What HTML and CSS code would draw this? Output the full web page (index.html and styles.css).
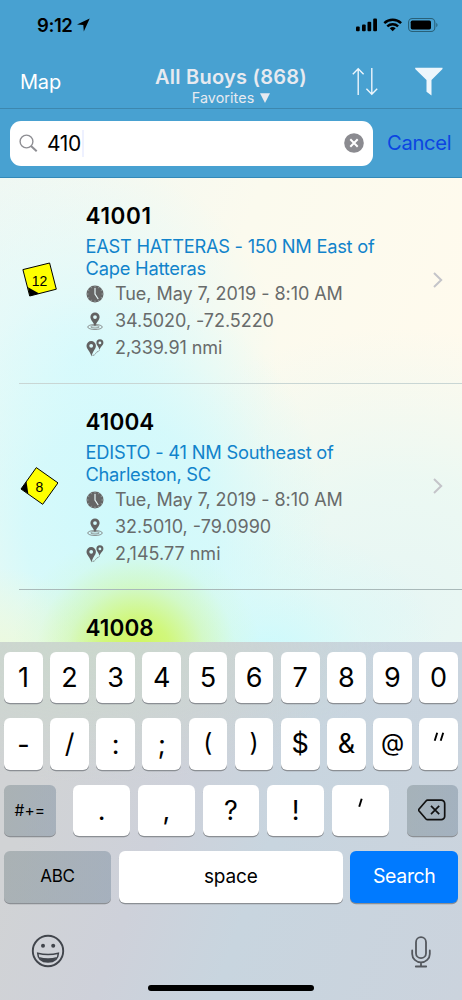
FILE: index.html
```html
<!DOCTYPE html>
<html lang="en">
<head>
<meta charset="utf-8">
<title>All Buoys</title>
<link rel="stylesheet" href="styles.css">
</head>
<body>
<svg class="defs" width="0" height="0">
  <symbol id="clock" viewBox="0 0 18 18">
    <circle cx="9" cy="9" r="8.5" fill="#666"/>
    <path d="M9 3v6l3.2 5" fill="none" stroke="#e6f5f5" stroke-width="1.2"/>
    <path d="M9 .8v1.7M9 15.5v1.7M.8 9h1.700M15.500 9h1.700M4.900 1.900l.7 1.300M1.900 4.900l1.300.7M16.100 4.900l-1.300.7M13.100 1.900l-.7 1.300M1.900 13.100l1.300-.7M4.900 16.100l.7-1.300M16.100 13.100l-1.300-.7M13.100 16.100l-.7-1.300" stroke="#b5c4c4" stroke-width=".6"/>
  </symbol>
  <symbol id="place" viewBox="0 0 18 18">
    <g fill="none" stroke="#777" stroke-width=".8"><ellipse cx="9" cy="15" rx="7.3" ry="2.5"/><ellipse cx="9" cy="14.8" rx="4.2" ry="1.2"/></g>
    <path fill="#626262" fill-rule="evenodd" d="M9 .4a4.6 4.6 0 0 0-4.6 4.6C4.4 8 7.5 10 9 14.5 10.500 10 13.600 8 13.600 5A4.600 4.600 0 0 0 9 .4zm0 2.800a1.900 1.900 0 1 1 0 3.800 1.900 1.900 0 0 1 0-3.800z"/>
  </symbol>
  <symbol id="distance" viewBox="0 0 18 18">
    <path fill="#626262" fill-rule="evenodd" d="M5.200 2A4.700 4.700 0 0 0 .5 6.700C.5 10 4.400 12.500 5.500 17.600 6.400 12.500 9.900 10 9.900 6.700A4.700 4.700 0 0 0 5.200 2zm0 2.900a1.900 1.900 0 1 1 0 3.800 1.900 1.900 0 0 1 0-3.800zM13.900.3a3.500 3.500 0 0 0-3.500 3.500C10.400 6.300 12.800 7.500 13.500 11 14.500 7.500 17.400 6.300 17.400 3.800A3.500 3.500 0 0 0 13.900.3zm0 2.200a1.400 1.400 0 1 1 0 2.800 1.400 1.400 0 0 1 0-2.800z"/>
    <path d="M6.500 16.300c3.500.2 2.500-2.600 5-3.600 1.500-.5 1.800-1 2-1.800" fill="none" stroke="#666" stroke-width=".8" stroke-dasharray="1.300 .6"/>
  </symbol>
</svg>

<header class="top">
  <div class="status">
    <span class="time">9:12</span>
    <svg class="arrow" width="13" height="14" viewBox="0 0 13 14"><path d="M12.700.4L6.800 13.400 6.300 6.900 0 6.400z"/></svg>
    <span class="grow"></span>
    <svg width="84" height="16" viewBox="0 0 84 16">
      <rect x="1" y="9.600" width="3.700" height="4.600" rx="1"/><rect x="7" y="7.400" width="3.700" height="6.800" rx="1"/><rect x="12.500" y="4.800" width="3.700" height="9.400" rx="1"/><rect x="18.200" y="1.600" width="3.800" height="12.600" rx="1"/>
      <g fill="none" stroke="#000" stroke-width="2.500"><path d="M29.300 6.100a12.300 12.300 0 0 1 16.800 0"/><path d="M32.300 9.300a8 8 0 0 1 10.800 0"/></g>
      <path d="M34.700 11.300a4.700 4.700 0 0 1 6 0l-3 2.900z"/>
      <rect x="53.600" y="1.500" width="26.200" height="13" rx="3.800" fill="none" stroke="#286078" stroke-width="1.100"/>
      <rect x="55.700" y="3.600" width="20.300" height="8.900" rx="1.700"/><path d="M81.300 5.800c1.600.8 1.600 3.600 0 4.400z" fill="#286078"/>
    </svg>
  </div>
  <nav class="nav">
    <span class="map">Map</span>
    <div class="heading"><h1>All Buoys (868)</h1><p>Favorites <svg width="10" height="10" viewBox="0 0 10 10"><path d="M0 .3h10L5 10z" fill="#e7eaf0"/></svg></p></div>
    <svg class="sort" width="26" height="29" viewBox="0 0 26 29"><path d="M6.200 28V1.700M.8 7.200l5.400-5.500 5.400 5.500M19.800 1v26.300M14.400 21.800l5.400 5.500 5.400-5.500" fill="none" stroke="#edf6fc" stroke-width="1.400"/></svg>
    <svg class="filter" width="28" height="29" viewBox="0 0 28 29"><path d="M.2.800h27.300v1.300L16.500 13v15.500l-5-3.700V13L.2 2.100z" fill="#edf6fc"/></svg>
  </nav>
</header>
<section class="searchbar">
  <div class="field">
    <svg width="19" height="19" viewBox="0 0 19 19"><circle cx="7.500" cy="7.500" r="6.400" fill="none" stroke="#8e8e93" stroke-width="1.400"/><path d="M12 12l5.700 5.300" stroke="#8e8e93" stroke-width="2"/></svg>
    <span class="query">410</span><i class="caret"></i>
    <svg class="clear" width="20" height="20" viewBox="0 0 20 20"><circle cx="10" cy="10" r="9.800" fill="#8b8b90"/><path d="M6.300 6.300l7.400 7.400M13.700 6.300l-7.400 7.400" stroke="#fff" stroke-width="2"/></svg>
  </div>
  <span class="cancel">Cancel</span>
</section>

<main class="list">
  <article class="row">
    <svg class="badge" width="38" height="40" viewBox="0 0 38 40"><path d="M2.900 8.600L29.600 2l6.700 26.200L9.700 35z" fill="#ff0" stroke="#000"/><path d="M8 26.300L19.200 32.600 9.700 35z"/><text x="19.500" y="25" text-anchor="middle">12</text></svg>
    <div class="info">
      <h2 class="wide">41001</h2>
      <p class="place"><span class="a1">EAST HATTERAS - 150 NM East of</span><br><span class="a2">Cape Hatteras</span></p>
      <p class="line"><svg><use href="#clock"/></svg><span class="date">Tue, May 7, 2019 - 8:10 AM</span></p>
      <p class="line"><svg><use href="#place"/></svg><span class="coords">34.5020, -72.5220</span></p>
      <p class="line"><svg><use href="#distance"/></svg><span class="dist">2,339.91 nmi</span></p>
    </div>
    <svg class="chev" width="10" height="16" viewBox="0 0 10 16"><path d="M1 1l7.200 7L1 15" fill="none" stroke="#c4c4c9" stroke-width="2"/></svg>
  </article>
  <article class="row second">
    <svg class="badge" width="38" height="40" viewBox="0 0 38 40"><path d="M16.300.6L38 15.900 22.700 37.300 1 22z" fill="#ff0" stroke="#000"/><path d="M6.500 14.500L8.300 26.800 1 22z"/><text x="19.300" y="25" text-anchor="middle">8</text></svg>
    <div class="info">
      <h2>41004</h2>
      <p class="place"><span class="b1">EDISTO - 41 NM Southeast of</span><br><span class="b2">Charleston, SC</span></p>
      <p class="line"><svg><use href="#clock"/></svg><span class="date">Tue, May 7, 2019 - 8:10 AM</span></p>
      <p class="line"><svg><use href="#place"/></svg><span>32.5010, -79.0990</span></p>
      <p class="line"><svg><use href="#distance"/></svg><span>2,145.77 nmi</span></p>
    </div>
    <svg class="chev" width="10" height="16" viewBox="0 0 10 16"><path d="M1 1l7.200 7L1 15" fill="none" stroke="#c4c4c9" stroke-width="2"/></svg>
  </article>
  <article class="row third"><span class="badge"></span><div class="info"><h2>41008</h2></div></article>
</main>

<section class="keyboard">
  <div class="keys ten"><b>1</b><b>2</b><b>3</b><b>4</b><b>5</b><b>6</b><b>7</b><b>8</b><b>9</b><b>0</b></div>
  <div class="keys ten"><b class="low">-</b><b>/</b><b class="low">:</b><b class="low">;</b><b class="paren">(</b><b class="paren">)</b><b>$</b><b>&amp;</b><b class="at">@</b><b><svg width="12" height="26" viewBox="0 0 12 26"><path d="M4.200 1.800L1.700 9.800M10.200 1.800L7.700 9.800" stroke="#000" stroke-width="1.900"/></svg></b></div>
  <div class="keys seven">
    <b class="dark sym">#+=</b>
    <div class="mid"><b>.</b><b>,</b><b>?</b><b>!</b><b><svg width="6" height="26" viewBox="0 0 6 26"><path d="M4.700 1.800L2.200 9.800" stroke="#000" stroke-width="1.900"/></svg></b></div>
    <b class="dark"><svg width="28" height="22" viewBox="0 0 28 22"><g fill="none" stroke="#111" stroke-width="1.700" stroke-linejoin="round"><path d="M9.500 1.200H23.200a3.500 3.500 0 0 1 3.500 3.500v12.500a3.500 3.500 0 0 1-3.500 3.500H9.500Q8.700 20.700 8 20L.9 11.800Q.3 11 .9 10.200L8 2Q8.700 1.200 9.500 1.200z"/><path d="M13 6.900l8.200 8.200M21.200 6.900l-8.200 8.200"/></g></svg></b>
  </div>
  <div class="keys bottom"><b class="dark abc">ABC</b><b class="space">space</b><b class="go">Search</b></div>
  <div class="tools">
    <svg width="34" height="34" viewBox="0 0 34 34"><circle cx="17" cy="17" r="15.200" fill="none" stroke="#41454c" stroke-width="1.900"/><circle cx="12" cy="11.800" r="2" fill="#41454c"/><circle cx="22.200" cy="11.800" r="2" fill="#41454c"/><path d="M6.700 19.200q10.300 2.600 20.700 0Q27 28 17 28T6.700 19.200z" fill="none" stroke="#41454c" stroke-width="1.500"/><path d="M8 23q9 2.500 18 0-2.500 5-9 5t-9-5z" fill="#41454c"/></svg>
    <svg class="mic" width="20" height="32" viewBox="0 0 20 32"><g fill="none" stroke="#54585e" stroke-width="1.800" stroke-linecap="round"><rect x="5" y="1.200" width="10" height="21" rx="5"/><path d="M1.200 14.500v3.500a8.800 8.300 0 0 0 17.600 0v-3.500M10 26.300v4M4.800 30.500h10.400"/></g></svg>
  </div>
  <div class="home"></div>
</section>
</body>
</html>
```
FILE: styles.css
```css
* { box-sizing: border-box; }
body { margin: 0; width: 462px; height: 1000px; overflow: hidden; display: flex; flex-direction: column; font-family: Inter, "Liberation Sans", sans-serif; color: #000; }
h1, h2, p { margin: 0; font-weight: 400; }
svg { display: block; flex: none; }
.defs { position: absolute; }
.top { height: 109px; background: #48a1d1; border-bottom: 1px solid #3d87ae; flex: none; }
.status { height: 49px; display: flex; align-items: center; padding: 0 23px 0 37px; }
.time { font-size: 18.500px; font-weight: 600; letter-spacing: -.4px; }
.arrow { margin-left: 5px; }
.grow { flex: 1; }
.nav { height: 59px; display: grid; grid-template-columns: 116px 230px 46px 1fr; padding-top: 1px; color: #fff; }
.map { font-size: 20px; line-height: 24px; padding: 20px 0 0 20px; letter-spacing: -.2px; }
.heading { text-align: center; color: #e7eaf0; padding-top: 15px; }
.heading h1 { font-size: 20px; line-height: 24px; font-weight: 600; letter-spacing: .25px; }
.heading p { display: flex; justify-content: center; align-items: center; gap: 6px; font-size: 14.300px; line-height: 18px; letter-spacing: .1px; }
.sort { margin: 17px 0 0 6px; }
.filter { margin: 17px 0 0 23px; }
.searchbar { height: 69px; flex: none; display: flex; align-items: center; background: #48a1d1; border-bottom: 1px solid #3289b8; padding-left: 10px; }
.field { width: 363px; height: 45px; border-radius: 11px; background: #fff; display: flex; align-items: center; padding: 0 9px 0 9px; }
.query { font-size: 21px; margin-left: 9px; letter-spacing: -.4px; }
.caret { width: 2px; height: 27px; background: #eef1ff; margin-left: 1px; }
.clear { margin-left: auto; }
.cancel { font-size: 20.200px; color: #0b45e2; margin-left: 14px; letter-spacing: -.3px; position: relative; top: -1px; }
.list { height: 463.500px; flex: none; overflow: hidden; background:
  radial-gradient(ellipse 125px 120px at 136px 475px, #d1f55c 0%, rgba(208,247,110,.9) 28%, rgba(208,248,150,.5) 55%, rgba(210,250,190,.15) 80%, rgba(210,250,190,0) 100%),
  radial-gradient(ellipse 100px 90px at 0px 480px, #ecfadc, rgba(230,250,225,0)),
  radial-gradient(ellipse 210px 240px at 120px 350px, #cff9fc 0%, rgba(209,249,252,.85) 45%, rgba(212,250,250,.3) 78%, rgba(214,250,250,0) 100%),
  radial-gradient(ellipse 180px 130px at 265px 475px, #cbfafd 0%, rgba(212,250,250,.4) 55%, rgba(218,250,250,0) 100%),
  radial-gradient(ellipse 200px 200px at 80px 180px, #d9fafd 0%, rgba(220,250,253,.5) 50%, rgba(222,250,253,0) 100%),
  radial-gradient(ellipse 330px 280px at 400px 430px, #e7f6f4 0%, rgba(231,248,244,.8) 45%, rgba(236,248,243,0) 100%),
  linear-gradient(110deg, #f0f8f3 0%, #fbfaee 42%, #fffaed 85%); }
.row { height: 206px; display: grid; grid-template-columns: 65px 338px 1fr; padding-left: 21px; position: relative; }
.row::after { content: ""; position: absolute; left: 19px; right: 0; bottom: 0; height: 1px; background: #c9d6d4; }
.second::after { background: #a9b9b9; }
.third::after { display: none; }
.badge { margin: 83px 0 0 -1px; font: 14px "Liberation Sans", sans-serif; }
.second .badge { margin-top: 83px; }
.info { padding-top: 24px; margin-left: -.5px; }
.info h2 { font-size: 22.500px; line-height: 28px; font-weight: 600; letter-spacing: .1px; }
.info .wide { letter-spacing: .65px; }
.place { margin: 5px 0 1px; font-size: 18.300px; line-height: 22px; color: #1183cb; white-space: nowrap; }
.a1 { letter-spacing: -.26px; }
.a2 { letter-spacing: -.22px; }
.b1 { letter-spacing: -.22px; }
.b2 { letter-spacing: -.3px; }
.line { display: flex; align-items: center; height: 27px; font-size: 18px; color: #686b6b; white-space: nowrap; }
.line svg { width: 18px; height: 18px; margin-right: 11.500px; }
.date, .coords, .dist { letter-spacing: -.05px; }
.chev { margin: 94px 0 0 9px; }
.keyboard { flex: 1; display: flex; flex-direction: column; background: radial-gradient(ellipse 300px 140px at 90px 0, rgba(202,216,204,.9), rgba(202,216,204,0)), linear-gradient(110deg, #d1d3d5 15%, #ced1da 38%, #c8d5df 58%, #cbd3dd 100%); padding: 10px 4px 0; }
.keys { height: 51.500px; margin-bottom: 15px; display: grid; }
.keys b { display: flex; align-items: center; justify-content: center; background: #fff; border-radius: 6px; box-shadow: 0 1.300px 0 #8b8f94; font-weight: 400; font-size: 27px; }
.ten { grid-template-columns: repeat(10, 1fr); column-gap: 7.400px; }
.ten .paren { font-size: 25px; padding-bottom: 3px; }
.ten .low { padding-top: 2px; }
.keys .at { font-size: 24px; padding-bottom: 2px; }
.seven { grid-template-columns: 51.500px 315.600px 51.500px; justify-content: space-between; }
.mid { display: grid; grid-template-columns: repeat(5, 1fr); column-gap: 7.700px; }
.bottom { grid-template-columns: 107px 224.300px 107.500px; justify-content: space-between; }
.keys .dark { background: linear-gradient(100deg, rgba(120,135,138,.44), rgba(120,139,158,.47)); }
.keys .sym { font-size: 15.500px; }
.keys .abc { font-size: 17px; letter-spacing: -.3px; padding-bottom: 2px; }
.keys .space { font-size: 19px; letter-spacing: -.15px; }
.keys .go { font-size: 19.500px; background: #007aff; color: #fff; letter-spacing: -.35px; padding-bottom: 2px; }
.tools { display: flex; justify-content: space-between; padding: 16px 27px 0 27px; height: 67.500px; }
.mic { margin-top: 2px; }
.home { width: 166px; height: 6px; border-radius: 3px; background: #000; margin: 0 auto; }
```
